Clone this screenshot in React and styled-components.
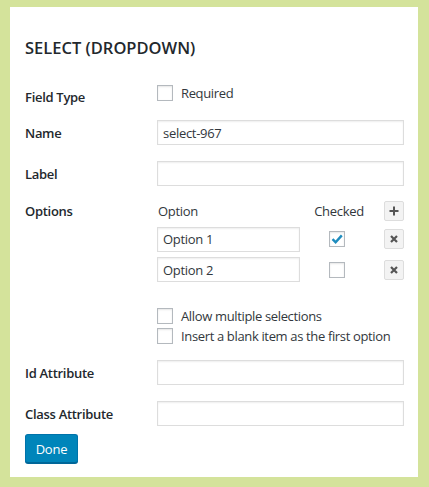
import React from 'react';
import styled, { createGlobalStyle } from 'styled-components';

const GlobalStyle = createGlobalStyle`
  html, body {
    margin: 0;
    padding: 0;
    background: #d4e39b;
  }
  body {
    font-family: "Open Sans", "Noto Sans", sans-serif;
    font-size: 13px;
    color: #32373c;
  }
  * {
    box-sizing: border-box;
  }
`;

const Panel = styled.div`
  margin: 7px 0 0 10px;
  width: 408px;
  height: 470px;
  background: #fff;
  padding: 31px 14px 0 15px;
`;

const Title = styled.h3`
  margin: 0;
  font-size: 16.5px;
  line-height: 20px;
  font-weight: 600;
  color: #23282d;
`;

const Row = styled.div`
  display: grid;
  grid-template-columns: 132px 1fr;
  align-items: ${(p) => (p.$top ? 'start' : 'center')};
  margin-top: ${(p) => p.$gap}px;
`;

const Label = styled.label`
  font-weight: 600;
  color: #23282d;
  line-height: 20px;
  letter-spacing: -0.3px;
  padding-top: ${(p) => p.$offset || 0}px;
`;

const TextInput = styled.input`
  display: block;
  width: ${(p) => (p.$width ? `${p.$width}px` : '100%')};
  height: 25px;
  border: 1px solid #ddd;
  box-shadow: inset 0 1px 2px rgba(0, 0, 0, 0.07);
  background: #fff;
  padding: 0 5px;
  font-family: inherit;
  font-size: 13px;
  color: #32373c;
  letter-spacing: -0.3px;
  outline: none;
  margin: 0;
`;

const Check = styled.span`
  display: inline-flex;
  align-items: center;
  justify-content: center;
  flex: none;
  width: 16px;
  height: 16px;
  border: 1px solid #b4b9be;
  background: #fff;
  box-shadow: inset 0 1px 2px rgba(0, 0, 0, 0.1);
`;

const CheckLine = styled.div`
  display: flex;
  align-items: center;
  gap: 8px;
  height: ${(p) => p.$h || 20}px;
  line-height: 16px;
  letter-spacing: -0.35px;
`;

const OptionsGrid = styled.div`
  display: grid;
  grid-template-columns: 158px 48px 1fr 20px;
  grid-template-rows: 20px 25px 25px;
  row-gap: 5.5px;
  align-items: center;
`;

const ColHead = styled.span`
  line-height: 20px;
  letter-spacing: -0.3px;
  justify-self: ${(p) => p.$align || 'start'};
  padding-left: ${(p) => p.$pad || 0}px;
`;

const CheckCell = styled.div`
  justify-self: center;
  margin-right: 4px;
  display: flex;
`;

const IconButton = styled.button`
  grid-column: 4;
  width: 20px;
  height: 20px;
  padding: 0;
  border: 1px solid #ddd;
  border-radius: 2px;
  background: #f3f3f3;
  display: flex;
  align-items: center;
  justify-content: center;
  color: #555;
`;

const ExtraChecks = styled.div`
  display: flex;
  flex-direction: column;
  margin-top: 24px;
`;

const DoneButton = styled.button`
  margin-top: 8px;
  height: 29px;
  width: 53px;
  padding: 0;
  font-family: inherit;
  font-size: 13px;
  color: #fff;
  background: #0085ba;
  border: 1px solid #0073aa;
  border-bottom-color: #006799;
  border-radius: 3px;
  box-shadow: 0 1px 0 #006799;
  letter-spacing: -0.2px;
`;

const CheckMark = () => (
  <svg width="14" height="14" viewBox="0 0 14 14">
    <path d="M2.5 7.2 L5.6 10.2 L11.8 3.4" fill="none" stroke="#1e8cbe" strokeWidth="2.4" />
  </svg>
);

const PlusIcon = () => (
  <svg width="10" height="10" viewBox="0 0 10 10">
    <path d="M5 0.5 V9.5 M0.5 5 H9.5" stroke="#555" strokeWidth="2" />
  </svg>
);

const CloseIcon = () => (
  <svg width="8" height="8" viewBox="0 0 8 8">
    <path d="M1 1 L7 7 M7 1 L1 7" stroke="#555" strokeWidth="2.2" />
  </svg>
);

const options = [
  { label: 'Option 1', checked: true },
  { label: 'Option 2', checked: false },
];

export default function App() {
  return (
    <>
      <GlobalStyle />
      <Panel>
        <Title>SELECT (DROPDOWN)</Title>

        <Row $gap={27} $top>
          <Label $offset={2}>Field Type</Label>
          <CheckLine $h={16}>
            <Check />
            <span>Required</span>
          </CheckLine>
        </Row>

        <Row $gap={13}>
          <Label>Name</Label>
          <TextInput defaultValue="select-967" />
        </Row>

        <Row $gap={16}>
          <Label>Label</Label>
          <TextInput />
        </Row>

        <Row $gap={15} $top>
          <Label>Options</Label>
          <div>
            <OptionsGrid>
              <ColHead $pad={1}>Option</ColHead>
              <ColHead $align="center">Checked</ColHead>
              <IconButton>
                <PlusIcon />
              </IconButton>
              {options.map((o) => (
                <React.Fragment key={o.label}>
                  <TextInput $width={143} defaultValue={o.label} />
                  <CheckCell>
                    <Check>{o.checked && <CheckMark />}</Check>
                  </CheckCell>
                  <IconButton>
                    <CloseIcon />
                  </IconButton>
                </React.Fragment>
              ))}
            </OptionsGrid>
            <ExtraChecks>
              <CheckLine>
                <Check />
                <span>Allow multiple selections</span>
              </CheckLine>
              <CheckLine>
                <Check />
                <span>Insert a blank item as the first option</span>
              </CheckLine>
            </ExtraChecks>
          </div>
        </Row>

        <Row $gap={14}>
          <Label>Id Attribute</Label>
          <TextInput />
        </Row>

        <Row $gap={16}>
          <Label>Class Attribute</Label>
          <TextInput />
        </Row>

        <DoneButton>Done</DoneButton>
      </Panel>
    </>
  );
}
